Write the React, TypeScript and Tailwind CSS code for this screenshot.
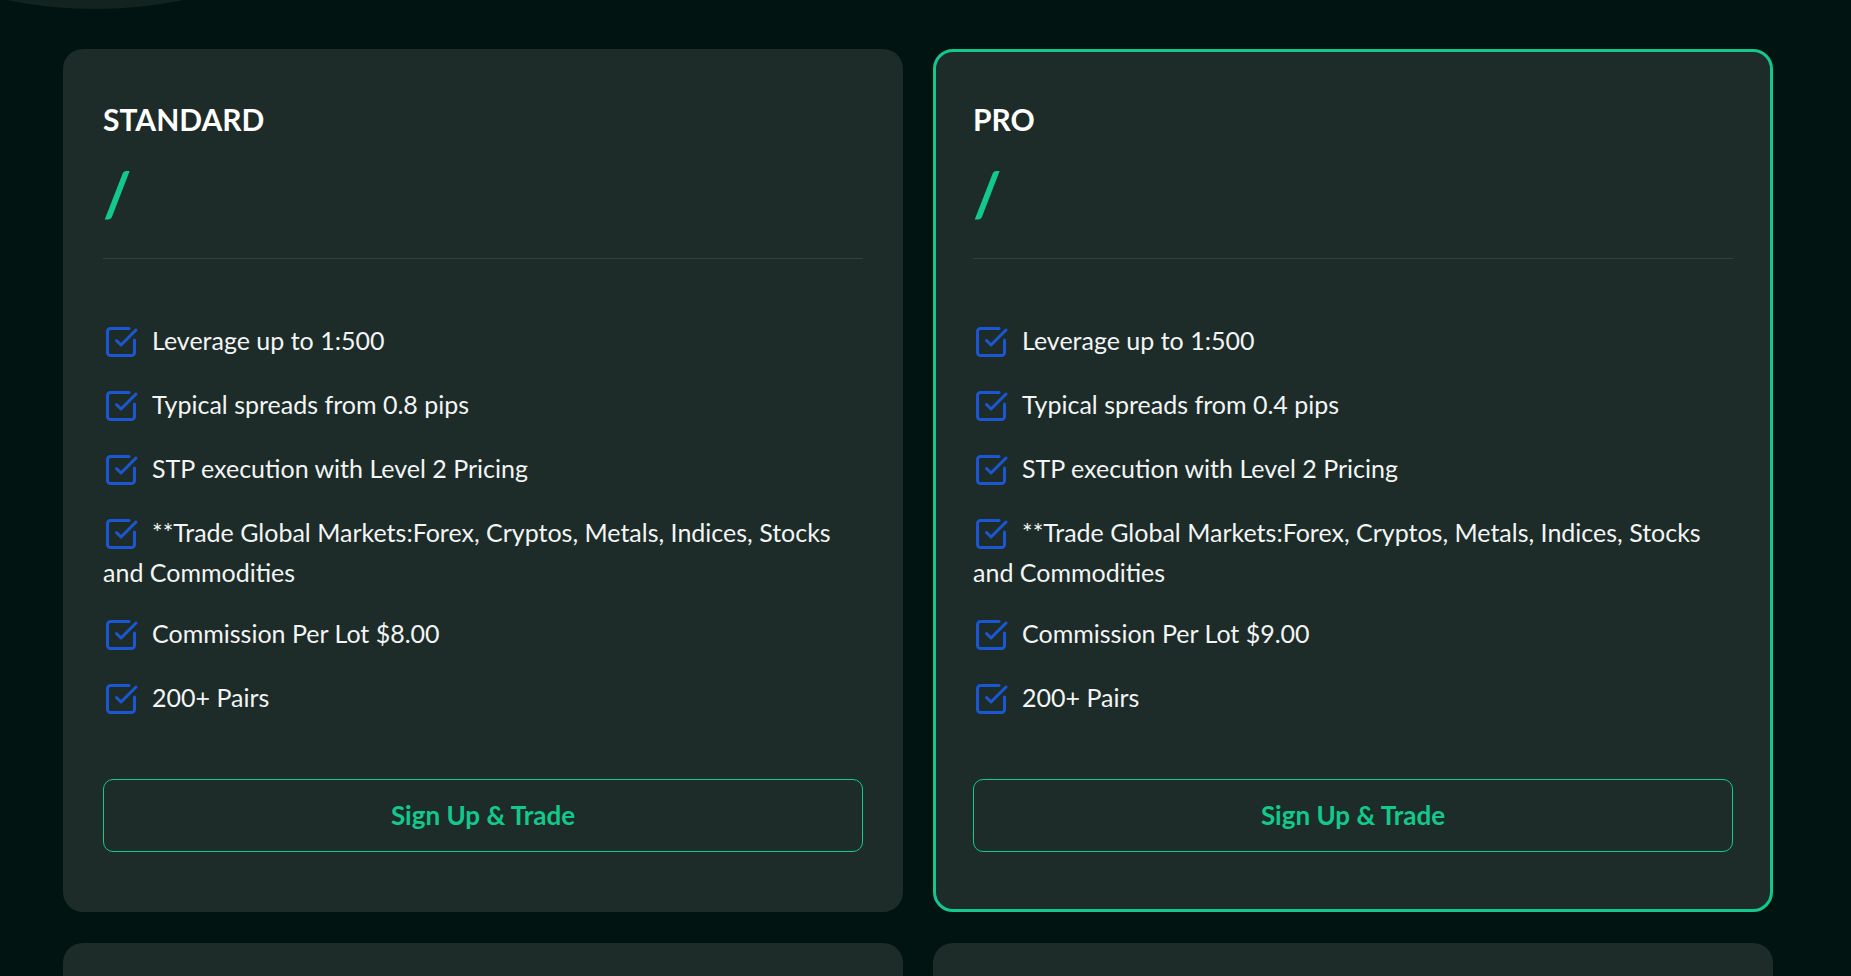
import { SquareCheckBig } from "lucide-react";

type Plan = {
  name: string;
  featured?: boolean;
  features: string[];
};

const features = (spread: string, commission: string) => [
  "Leverage up to 1:500",
  `Typical spreads from ${spread} pips`,
  "STP execution with Level 2 Pricing",
  "**Trade Global Markets:Forex, Cryptos, Metals, Indices, Stocks and Commodities",
  `Commission Per Lot ${commission}`,
  "200+ Pairs",
];

const plans: Plan[] = [
  { name: "STANDARD", features: features("0.8", "$8.00") },
  { name: "PRO", featured: true, features: features("0.4", "$9.00") },
];

function PlanCard({ plan }: { plan: Plan }) {
  return (
    <div
      className={`flex flex-col rounded-[20px] border-[3px] bg-[#1d2c29] px-[37px] pt-[49px] pb-[57px] ${
        plan.featured ? "border-[#12c98b]" : "border-transparent"
      }`}
    >
      <h3 className="text-[30px] font-bold leading-[36px] text-white">{plan.name}</h3>

      {/* price placeholder */}
      <div className="mt-[27px] h-[60px] text-[61px] font-bold leading-[60px] text-[#12c98b]">/</div>

      <div className="mt-[34px] h-px bg-[#34423f]" />

      <ul className="mt-[61px]">
        {plan.features.map((f, i) => (
          <li
            key={f}
            className={`text-[25px] leading-[40px] text-[#f3f5f4] ${
              i === 5 ? "mb-0" : i === 3 ? "mb-[21px]" : "mb-6"
            }`}
          >
            <SquareCheckBig
              className="mr-[13px] inline-block h-9 w-9 align-[-10px] text-[#1c57d3]"
              strokeWidth={2}
            />
            {f}
          </li>
        ))}
      </ul>

      <button className="mt-[62px] h-[73px] w-full rounded-[10px] border border-[#12c98b] text-[26px] font-bold text-[#12c98b]">
        Sign Up &amp; Trade
      </button>
    </div>
  );
}

export default function App() {
  return (
    <div
      className="relative h-[976px] w-full overflow-hidden bg-[#011411]"
      style={{ fontFamily: "Lato, 'Noto Sans', sans-serif" }}
    >
      {/* bottom edge of the previous section's blob */}
      <div className="absolute left-[-340px] top-[-861px] h-[870px] w-[870px] rounded-full bg-[#132320]" />

      <div className="relative grid grid-cols-[840px_840px] gap-x-[30px] gap-y-[31px] pl-[63px] pt-[49px]">
        {plans.map((p) => (
          <PlanCard key={p.name} plan={p} />
        ))}
        {/* next row of plans, below the fold */}
        <div className="h-[863px] rounded-[20px] bg-[#1d2c29]" />
        <div className="h-[863px] rounded-[20px] bg-[#1d2c29]" />
      </div>
    </div>
  );
}
